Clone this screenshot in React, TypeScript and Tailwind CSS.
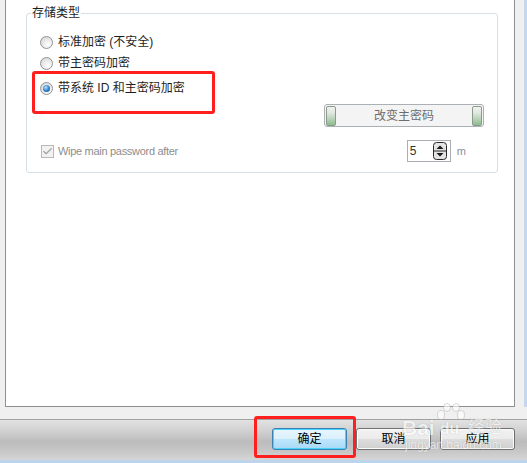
import { Check } from "lucide-react";

const font = "font-['Liberation_Sans','Noto_Sans_CJK_SC',sans-serif]";

function Radio({ label, checked }: { label: string; checked?: boolean }) {
  return (
    <div className="flex h-4 items-center gap-[5px] pl-[13px]">
      <div className="flex h-[13px] w-[13px] items-center justify-center rounded-full border border-[#8f9396] bg-[radial-gradient(circle_at_65%_70%,#ffffff,#e6e6e6_55%,#cfcfcf)]">
        {checked && (
          <div className="h-[7px] w-[7px] rounded-full bg-[radial-gradient(circle_at_40%_35%,#b3e4ff,#2f7cc9_55%,#0b3e7c)]" />
        )}
      </div>
      <span className="text-[12px] leading-4 text-[#1e1e1e]">{label}</span>
    </div>
  );
}

function Knob() {
  return (
    <div className="h-[20px] w-[10px] rounded-[2px] border border-[#8c9a8c] bg-[linear-gradient(#f2f2f2,#dfe6df_35%,#8cbc8c)]" />
  );
}

function SpinIcon() {
  return (
    <svg width="14" height="18" viewBox="0 0 14 18">
      <rect x="0.5" y="0.5" width="13" height="17" rx="3" fill="#e4e4e4" stroke="#2a2a2a" />
      <line x1="1" y1="9" x2="13" y2="9" stroke="#2a2a2a" />
      <path d="M3.5 7 L7 3.5 L10.5 7 Z" fill="#1a1a1a" />
      <path d="M3.5 11 L7 14.5 L10.5 11 Z" fill="#1a1a1a" />
    </svg>
  );
}

function DlgButton({ label, primary }: { label: string; primary?: boolean }) {
  return (
    <button
      className={
        primary
          ? "flex h-[22px] w-[75px] items-center justify-center rounded-[3px] border border-[#3c7fb1] bg-[linear-gradient(#eaf6fd_0%,#d9f0fc_50%,#bee6fd_51%,#a7d9f5_100%)] text-[12px] text-black shadow-[inset_0_0_0_1px_#48d4fc]"
          : "flex h-[22px] w-[75px] items-center justify-center rounded-[3px] border border-[#707070] bg-[linear-gradient(#f2f2f2_0%,#ebebeb_50%,#dddddd_51%,#cfcfcf_100%)] text-[12px] text-black shadow-[inset_0_0_0_1px_#fcfcfc]"
      }
    >
      {label}
    </button>
  );
}

export default function App() {
  return (
    <div className={`${font} relative flex h-[463px] w-[527px] flex-col overflow-hidden bg-[#f0f0f0]`}>
      {/* content area */}
      <div className="flex h-[407px] flex-row">
        <div className="w-[5px]" />
        <div className="h-[407px] w-[510px] border-x border-b border-[#8e8f8f] bg-white pl-[20px] pt-[13px]">
          {/* group box */}
          <div className="relative flex h-[160px] w-[472px] flex-col rounded-[3px] border border-[#d5dfe5]">
            <span className="-mt-[8px] ml-[4px] w-fit bg-white px-[1px] text-[12px] leading-[14px] text-[#1e1e1e]">
              存储类型
            </span>
            <div className="mt-[14px]">
              <Radio label="标准加密 (不安全)" />
            </div>
            <div className="mt-[5px]">
              <Radio label="带主密码加密" />
            </div>
            <div className="mt-[9px]">
              <Radio label="带系统 ID 和主密码加密" checked />
            </div>
            <div className="mt-[8px] flex justify-end pr-[13px]">
              <div className="flex h-[23px] w-[160px] items-center justify-between rounded-[3px] border border-[#aab0b3] bg-[#f4f4f4] px-[1px]">
                <Knob />
                <span className="text-[12px] text-[#6d6d6d]">改变主密码</span>
                <Knob />
              </div>
            </div>
            <div className="mt-[13px] flex h-[22px] items-center pl-[14px]">
              <div className="flex h-[13px] w-[13px] items-center justify-center border border-[#b8b8b8] bg-[#f2f2f2]">
                <Check className="h-[11px] w-[11px] text-[#a8a8a8]" strokeWidth={3} />
              </div>
              <span className="ml-[4px] text-[11px] tracking-[-0.3px] text-[#8d8d8d]">Wipe main password after</span>
              <div className="ml-auto flex h-[22px] w-[44px] items-center justify-between border border-[#abadb3] bg-white pl-[2px] pr-[3px]">
                <span className="text-[12px] text-[#333]">5</span>
                <SpinIcon />
              </div>
              <span className="ml-[6px] mr-[31px] text-[11px] text-[#8d8da0]">m</span>
            </div>
            {/* annotation box */}
            <div className="absolute left-[5px] top-[57px] h-[43px] w-[183px] rounded-[3px] border-[3px] border-[#ff1f1f]" />
          </div>
        </div>
        <div className="w-[9px]" />
        <div className="w-[3px] bg-[#c4d7ec]" />
      </div>
      <div className="h-[12px]" />
      <div className="h-px bg-[#a0a0a0]" />
      {/* button bar */}
      <div className="relative flex h-[40px] justify-end gap-[9px] bg-[linear-gradient(#e2e2e2,#cfcfcf_30%,#bcbcbc_55%,#c8c8c8_80%,#d6d6d6)] pr-[12px] pt-[8px]">
        <DlgButton label="确定" primary />
        <DlgButton label="取消" />
        <DlgButton label="应用" />
        <div className="absolute left-[254px] top-[-4px] h-[42px] w-[102px] rounded-[3px] border-[3px] border-[#ff1f1f]" />
        {/* watermark */}
        <div className="pointer-events-none absolute left-[402px] top-[-17px] flex flex-col items-start opacity-60">
          <div className="flex items-end">
            <span className="text-[21px] font-bold leading-[18px] text-white [text-shadow:0_0_1px_#8a8a8a]">Bai</span>
            <div className="relative ml-[2px] h-[34px] w-[28px]">
              <svg width="28" height="18" viewBox="0 0 28 18" className="absolute left-0 top-0">
                <ellipse cx="10" cy="4.5" rx="3.5" ry="4" fill="white" stroke="#9a9a9a" strokeWidth="0.6" />
                <ellipse cx="19" cy="4.5" rx="3.5" ry="4" fill="white" stroke="#9a9a9a" strokeWidth="0.6" />
                <ellipse cx="4" cy="12" rx="3.5" ry="4.5" fill="white" stroke="#9a9a9a" strokeWidth="0.6" />
                <ellipse cx="24" cy="12" rx="3.5" ry="4.5" fill="white" stroke="#9a9a9a" strokeWidth="0.6" />
              </svg>
              <span className="absolute bottom-0 left-[3px] text-[16px] font-bold leading-[16px] text-white [text-shadow:0_0_1px_#8a8a8a]">du</span>
            </div>
            <span className="ml-[3px] text-[17px] leading-[19px] text-white [text-shadow:0_0_1px_#8a8a8a]">经验</span>
          </div>
          <span className="ml-[3px] mt-[2px] text-[12px] leading-[12px] text-white [text-shadow:0_0_1px_#8a8a8a]">jingyan.baidu.com</span>
        </div>
      </div>
      <div className="h-[3px] bg-[#bcd4ec]" />
    </div>
  );
}
